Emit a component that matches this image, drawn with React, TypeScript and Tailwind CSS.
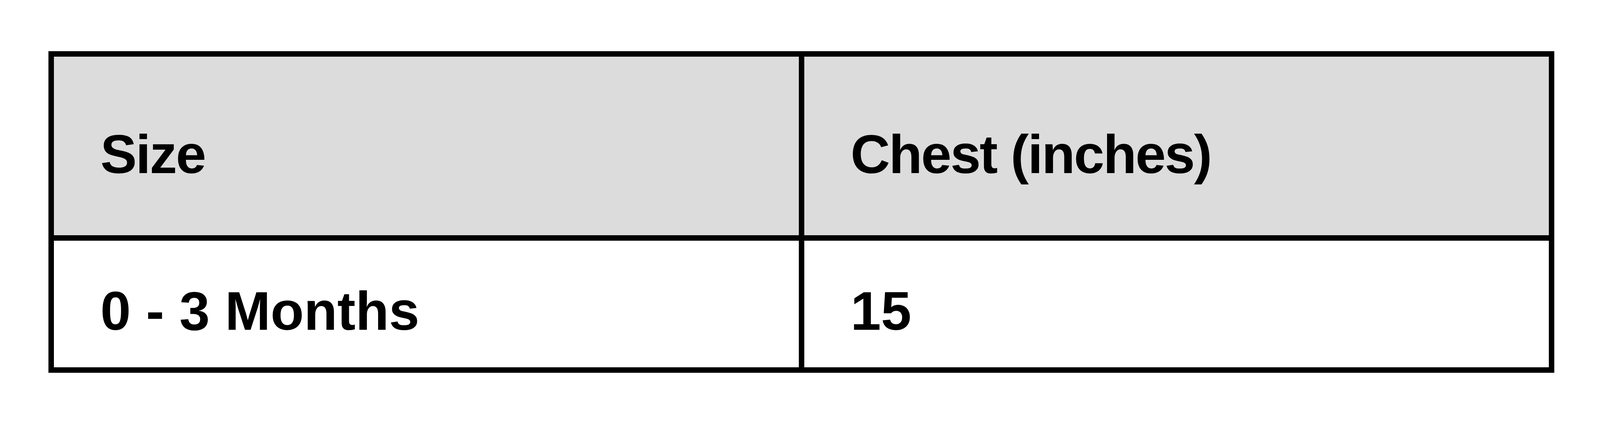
export default function App() {
  return (
    <div className="min-h-screen bg-white pt-[131px]" style={{ fontFamily: '"Liberation Sans", Arial, sans-serif' }}>
      <div className="ml-[3.03vw] w-[94.12vw] bg-black p-[14px] grid grid-cols-2 gap-[14px] text-black font-bold text-[140px] leading-[140px]">
        <div className="bg-[#dcdcdc] h-[457px] pl-[2.9vw] pt-[180px] whitespace-nowrap tracking-[-3px]">Size</div>
        <div className="bg-[#dcdcdc] h-[457px] pl-[2.9vw] pt-[180px] whitespace-nowrap tracking-[-3px]">Chest (inches)</div>
        <div className="bg-white h-[324px] pl-[2.9vw] pt-[110px] whitespace-nowrap">0 - 3 Months</div>
        <div className="bg-white h-[324px] pl-[2.9vw] pt-[110px] whitespace-nowrap">15</div>
      </div>
    </div>
  );
}
